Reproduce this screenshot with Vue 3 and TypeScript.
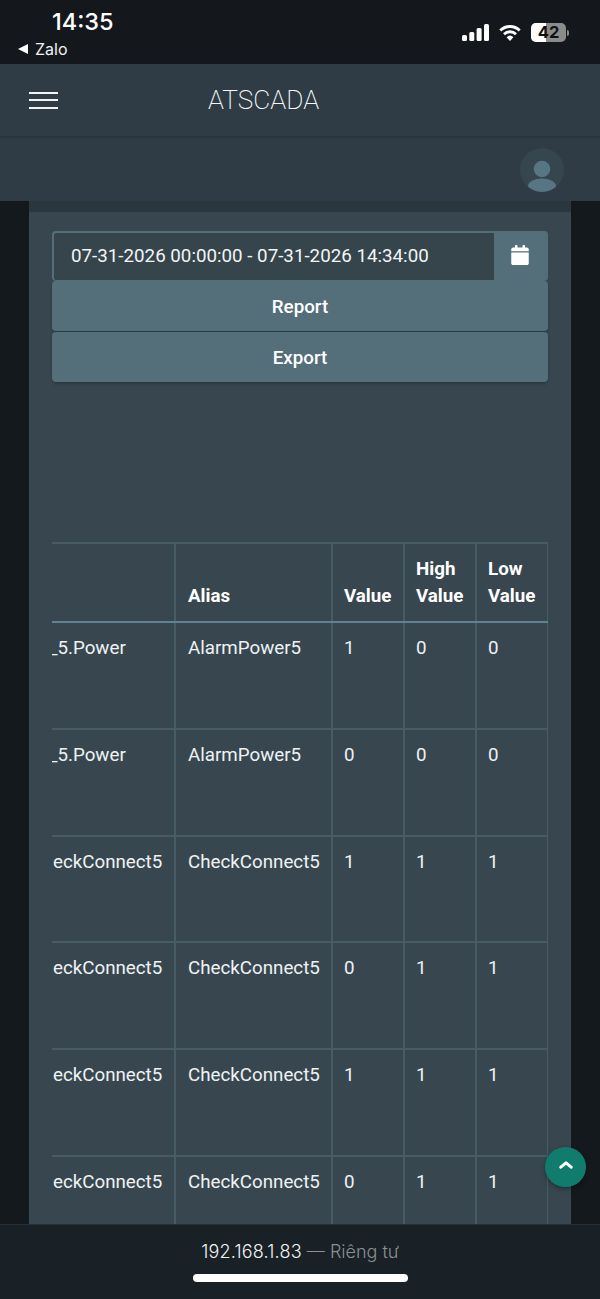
<script setup lang="ts">
interface Row { tag: string; alias: string; value: number; high: number; low: number; clipped?: boolean }
const rows: Row[] = [
  { tag: '_5.Power', alias: 'AlarmPower5', value: 1, high: 0, low: 0, clipped: true },
  { tag: '_5.Power', alias: 'AlarmPower5', value: 0, high: 0, low: 0, clipped: true },
  { tag: 'eckConnect5', alias: 'CheckConnect5', value: 1, high: 1, low: 1 },
  { tag: 'eckConnect5', alias: 'CheckConnect5', value: 0, high: 1, low: 1 },
  { tag: 'eckConnect5', alias: 'CheckConnect5', value: 1, high: 1, low: 1 },
  { tag: 'eckConnect5', alias: 'CheckConnect5', value: 0, high: 1, low: 1 },
]
</script>

<template>
  <div class="phone">
    <header class="status">
      <div class="status-left">
        <div class="time">14:35</div>
        <div class="back"><span class="tri"></span>Zalo</div>
      </div>
      <div class="status-right">
        <svg class="signal" width="27" height="17" viewBox="0 0 27 17">
          <rect x="0" y="11" width="5" height="6" rx="1.500" fill="#fff" />
          <rect x="7.300" y="8" width="5" height="9" rx="1.500" fill="#fff" />
          <rect x="14.600" y="4" width="5" height="13" rx="1.500" fill="#fff" />
          <rect x="22" y="0" width="5" height="17" rx="1.500" fill="#fff" />
        </svg>
        <svg class="wifi" width="22" height="17" viewBox="0 0 22 17">
          <path d="M1.300 6.400a14 14 0 0 1 19.400 0" fill="none" stroke="#fff" stroke-width="2.800" />
          <path d="M5 10.200a8.600 8.600 0 0 1 12 0" fill="none" stroke="#fff" stroke-width="2.800" />
          <path d="M11 17l-3.400-3.800a5 5 0 0 1 6.800 0z" fill="#fff" />
        </svg>
        <div class="battery">
          <span class="fill"></span>
          <span class="level">42</span>
        </div>
        <span class="nub"></span>
      </div>
    </header>

    <nav class="topbar">
      <div class="burger"><span></span><span></span><span></span></div>
      <div class="brand">ATSCADA</div>
    </nav>

    <div class="subbar">
      <div class="avatar">
        <svg width="44" height="44" viewBox="0 0 44 44">
          <circle cx="22" cy="21" r="8.300" fill="#587583" />
          <ellipse cx="22" cy="38" rx="14" ry="7.500" fill="#587583" />
        </svg>
      </div>
    </div>

    <main class="main">
      <section class="card">
        <div class="date-group">
          <div class="date-input">07-31-2026 00:00:00 - 07-31-2026 14:34:00</div>
          <div class="date-btn">
            <svg width="18" height="20" viewBox="0 0 448 512">
              <path fill="#fff" d="M0 464c0 26.500 21.500 48 48 48h352c26.500 0 48-21.500 48-48V192H0v272zM400 64h-48V16c0-8.800-7.200-16-16-16h-32c-8.800 0-16 7.200-16 16v48H160V16c0-8.800-7.200-16-16-16h-32c-8.800 0-16 7.200-16 16v48H48C21.500 64 0 85.500 0 112v48h448v-48c0-26.500-21.500-48-48-48z" />
            </svg>
          </div>
        </div>
        <div class="action">Report</div>
        <div class="action">Export</div>

        <div class="table-wrap">
          <table class="table">
            <thead>
              <tr>
                <th class="c-tag"></th>
                <th class="c-alias">Alias</th>
                <th class="c-num">Value</th>
                <th class="c-num">High Value</th>
                <th class="c-num">Low Value</th>
              </tr>
            </thead>
            <tbody>
              <tr v-for="(r, i) in rows" :key="i">
                <td class="c-tag" :class="{ clipped: r.clipped }">{{ r.tag }}</td>
                <td>{{ r.alias }}</td>
                <td class="n">{{ r.value }}</td>
                <td class="n">{{ r.high }}</td>
                <td class="n">{{ r.low }}</td>
              </tr>
            </tbody>
          </table>
        </div>
      </section>
    </main>

    <button class="fab" type="button" aria-label="Top">
      <svg width="14" height="8" viewBox="0 0 14 8">
        <path d="M1.800 6.200 7 1.800l5.200 4.400" fill="none" stroke="#fff" stroke-width="3" stroke-linecap="round" stroke-linejoin="round" />
      </svg>
    </button>

    <footer class="urlbar">
      <div class="url"><span class="ip">192.168.1.83</span><span class="priv"> — Riêng tư</span></div>
      <div class="home"></div>
    </footer>
  </div>
</template>

<style>
html, body { margin: 0; background: #14191e; }
</style>

<style scoped>
.phone {
  position: relative;
  width: 600px;
  height: 1299px;
  overflow: hidden;
  background: #14191e;
  font-family: Roboto, "Liberation Sans", sans-serif;
  color: #fff;
  display: flex;
  flex-direction: column;
}
.status {
  height: 64px;
  flex: none;
  background: #14181d;
  display: flex;
  justify-content: space-between;
  box-sizing: border-box;
  padding: 0 31px 0 18px;
}
.status-left { display: flex; flex-direction: column; }
.time {
  font-family: Inter, Roboto, sans-serif;
  font-size: 23.500px;
  font-weight: 500;
  line-height: 26px;
  margin: 9px 0 0 34px;
}
.back {
  display: flex;
  align-items: center;
  font-family: Inter, Roboto, sans-serif;
  font-size: 16px;
  line-height: 18px;
  margin-top: 5px;
  color: #f2f2f2;
}
.tri {
  width: 0;
  height: 0;
  border-style: solid;
  border-width: 5.500px 10px 5.500px 0;
  border-color: transparent #fff transparent transparent;
  margin-right: 7px;
}
.status-right { display: flex; align-items: flex-start; padding-top: 24px; }
.wifi { margin-left: 10px; }
.battery {
  position: relative;
  width: 35px;
  height: 19px;
  margin: -1px 0 0 10px;
  border-radius: 5px;
  background: #8b8b8b;
  overflow: hidden;
}
.battery .fill {
  position: absolute;
  left: 0;
  top: 0;
  bottom: 0;
  width: 15px;
  background: #fff;
}
.battery .level {
  position: absolute;
  inset: 0;
  text-align: center;
  font-family: Inter, Roboto, sans-serif;
  font-weight: 700;
  font-size: 16.500px;
  line-height: 19px;
  color: #111;
}
.nub {
  width: 2px;
  height: 6px;
  margin: 6px 0 0 1px;
  background: #8b8b8b;
  border-radius: 0 2px 2px 0;
}
.topbar {
  height: 74px;
  box-sizing: border-box;
  flex: none;
  background: #2f3c45;
  border-bottom: 2px solid #29353d;
  display: flex;
  align-items: center;
}
.burger {
  width: 29px;
  margin-left: 29px;
  display: flex;
  flex-direction: column;
  gap: 5.500px;
}
.burger span { height: 2px; background: #f2f4f5; }
.brand {
  margin-left: 150px;
  font-size: 26.250px;
  font-weight: 200;
  color: #f6f8f9;
}
.subbar {
  height: 63px;
  flex: none;
  background: #2f3c45;
  display: flex;
  align-items: center;
  justify-content: flex-end;
  padding-right: 36px;
}
.avatar {
  width: 44px;
  height: 44px;
  border-radius: 50%;
  background: #36464f;
  overflow: hidden;
}
.avatar svg { display: block; }
.main {
  flex: 1;
  padding: 0 29px;
  min-height: 0;
}
.card {
  height: 100%;
  box-sizing: border-box;
  background: #38474f;
  border-top: 11px solid #2a373e;
  padding: 19px 23px 0;
}
.date-group {
  display: flex;
  height: 50px;
}
.date-input {
  flex: 1;
  box-sizing: border-box;
  border: 1px solid #546e7a;
  border-width: 2px 0 1px 2px;
  border-radius: 4px 0 0 4px;
  background: #36444c;
  font-size: 18.750px;
  line-height: 46px;
  padding-left: 17px;
  color: #f2f5f6;
}
.date-btn {
  width: 54px;
  background: #546e7a;
  border-radius: 0 4px 4px 0;
  display: flex;
  align-items: center;
  justify-content: center;
  padding: 0 2px 2px 0;
  box-sizing: border-box;
}
.action {
  height: 50px;
  margin-bottom: 1px;
  background: #546e7a;
  border-radius: 4px;
  text-align: center;
  font-size: 18.750px;
  font-weight: 500;
  line-height: 52px;
  color: #fff;
  box-shadow: 0 2px 3px rgba(0, 0, 0, 0.22);
}
.table-wrap {
  margin-top: 160px;
  overflow: hidden;
}
.table {
  width: 496px;
  border-collapse: collapse;
  table-layout: fixed;
  font-size: 18.750px;
  line-height: 27px;
  color: #eef2f4;
}
.table th,
.table td {
  border: 2px solid #485c66;
  padding: 12px;
  text-align: left;
  vertical-align: top;
  box-sizing: border-box;
}
.table th {
  vertical-align: bottom;
  font-weight: 700;
  color: #fff;
  height: 78px;
  padding-bottom: 11px;
  border-bottom: 2px solid #5f8392;
}
.table td { height: 106.800px; }
.table .c-tag {
  width: 123px;
  padding-left: 1px;
  padding-right: 0;
  border-left: 0;
  white-space: nowrap;
}
.table .c-tag.clipped { padding-left: 0; text-indent: -3px; }
.table .n, .table .c-num { padding-left: 11px; padding-right: 4px; }
.c-alias { width: 157px; }
.c-num { width: 72px; }
.fab {
  position: absolute;
  left: 545px;
  top: 1147px;
  width: 41px;
  height: 40px;
  border: 0;
  padding: 0;
  border-radius: 50%;
  background: #0f7c6e;
  box-shadow: 0 2px 5px rgba(0, 0, 0, 0.35);
  display: flex;
  align-items: center;
  justify-content: center;
}
.fab svg { display: block; margin-top: -4px; }
.urlbar {
  position: absolute;
  left: 0;
  right: 0;
  bottom: 0;
  height: 75px;
  background: #192127;
  border-top: 1px solid #252e35;
  box-sizing: border-box;
}
.url {
  margin-top: 17px;
  text-align: center;
  font-family: Inter, Roboto, sans-serif;
  font-size: 18px;
  font-weight: 300;
  line-height: 20px;
  white-space: pre;
}
.ip { color: #f4f4f4; letter-spacing: 0.2px; }
.priv { color: #8c9094; }
.home {
  width: 215px;
  height: 8px;
  margin: 12px auto 0;
  background: #fff;
  border-radius: 4px;
}
</style>
